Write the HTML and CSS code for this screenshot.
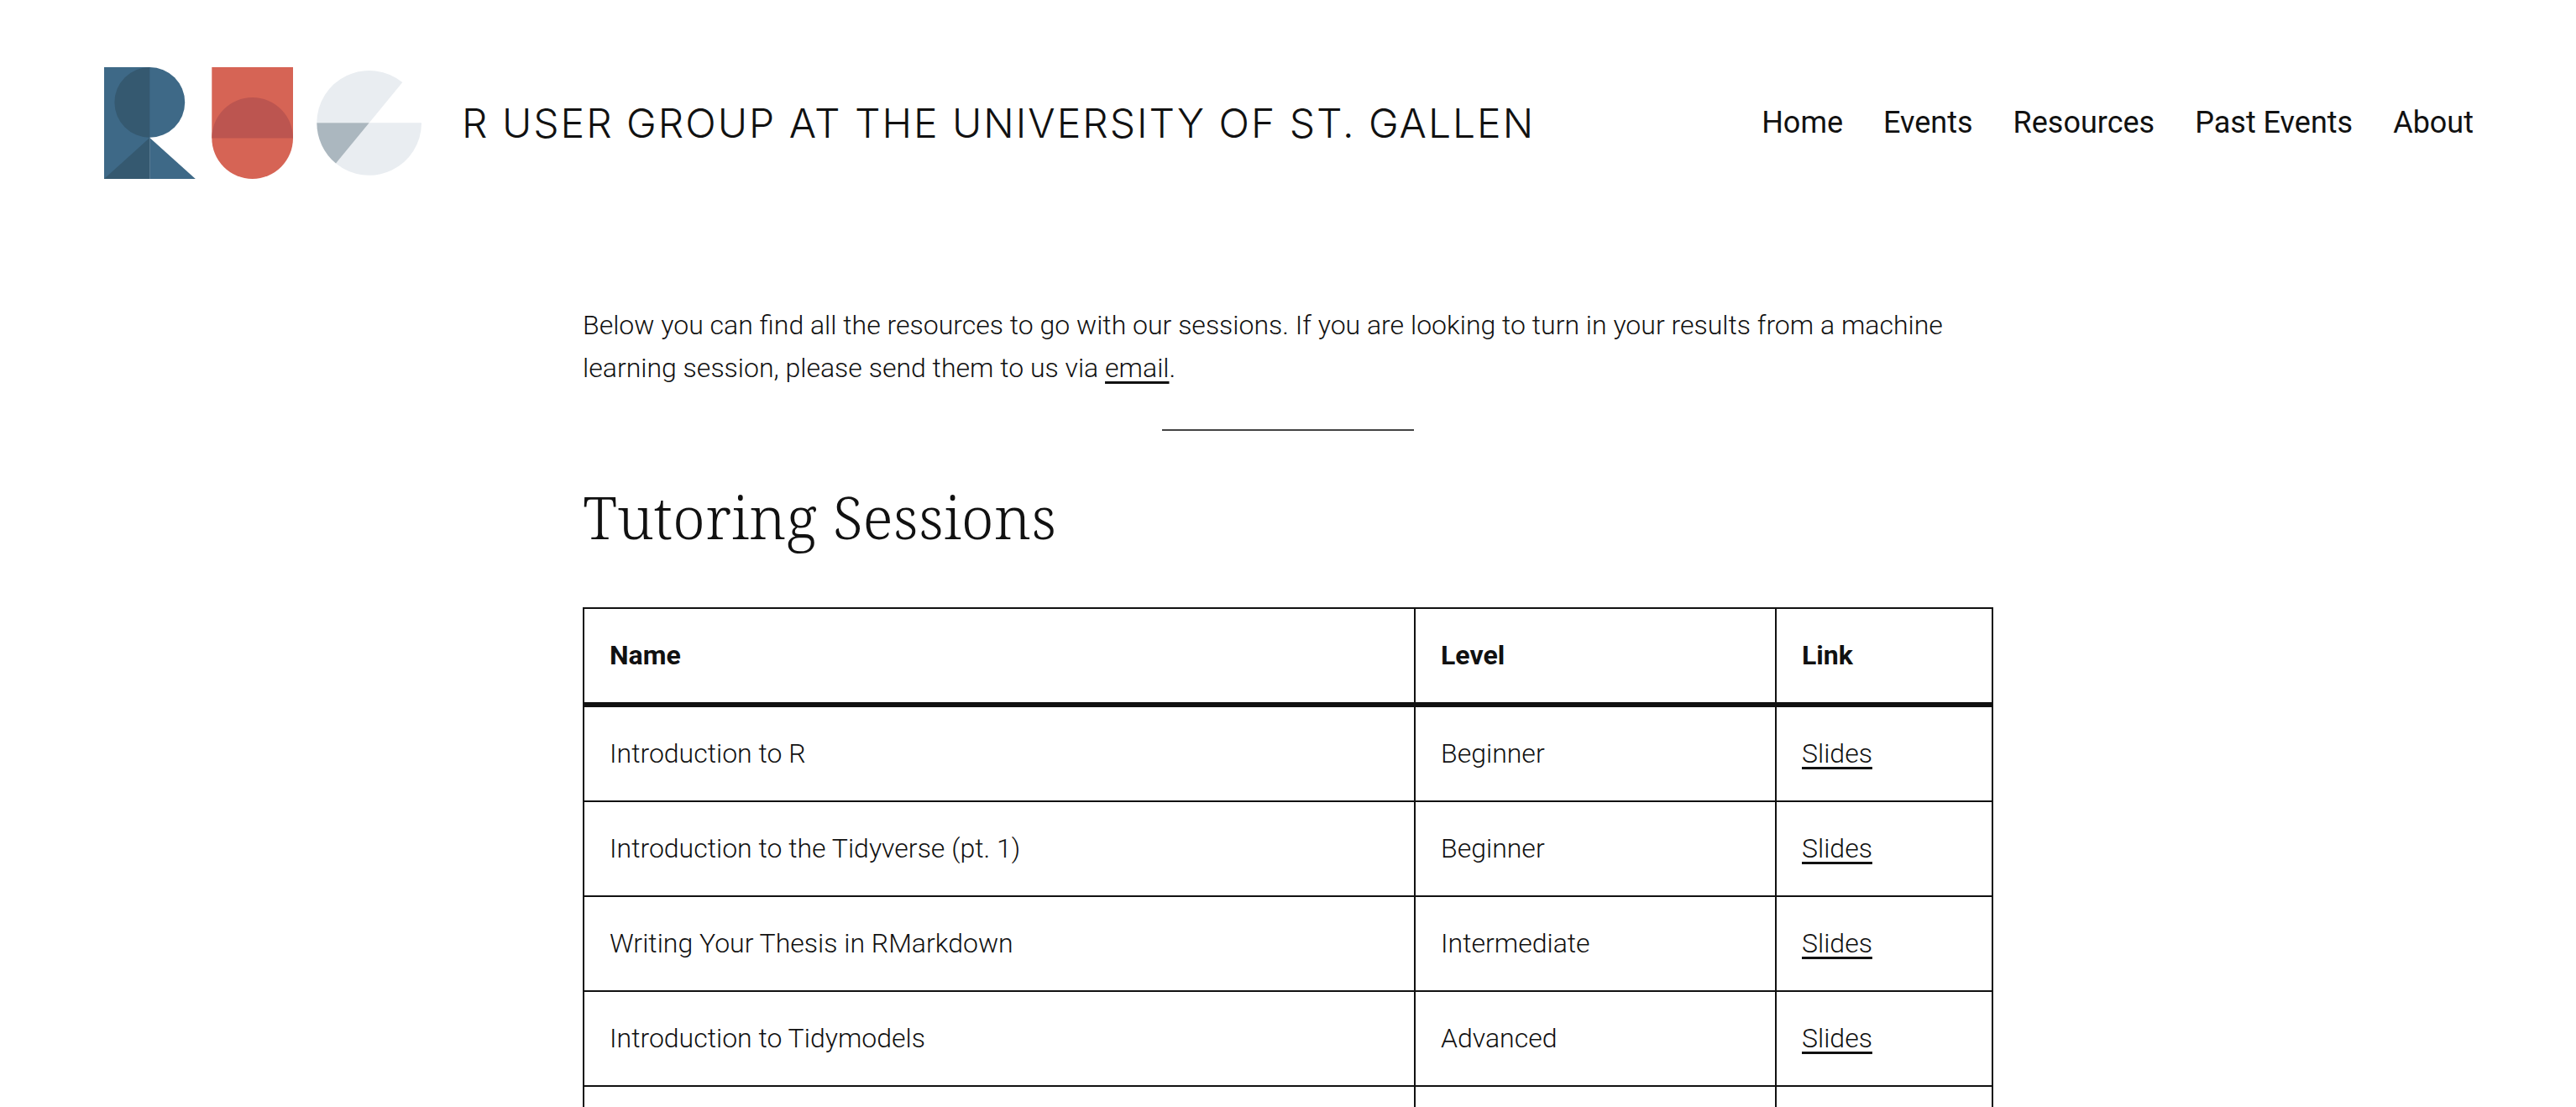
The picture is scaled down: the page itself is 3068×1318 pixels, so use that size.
FILE: index.html
```html
<!DOCTYPE html>
<html lang="en">
<head>
<meta charset="utf-8">
<title>Resources – R User Group at the University of St. Gallen</title>
<link rel="stylesheet" href="styles.css">
</head>
<body>
<header class="site-header">
  <div class="branding">
    <a class="logo" href="#" aria-label="Home page">
      <svg width="378" height="133" viewBox="0 0 378 133" aria-hidden="true">
        <g fill="#3e6987">
          <path d="M0 0H54.3V133H0z"/>
          <circle cx="54.3" cy="41.9" r="41.9"/>
          <path d="M54.3 84L108.8 133H54.3z"/>
        </g>
        <path fill="#355970" d="M54.3 0A41.9 41.9 0 0 0 54.3 83.8zM54.3 84V133H0z"/>
        <path fill="#d66455" d="M128.3 0H225V84.6A48.35 48.35 0 0 1 128.3 84.6z"/>
        <path fill="#bc5550" d="M128.3 84.4A48.35 48.35 0 0 1 225 84.4z"/>
        <path fill="#e9edf1" d="M315.7 66.3H253.3A62.4 62.4 0 0 1 355.3 18.1zM315.7 66.3H378A62.4 62.4 0 0 1 276 114.5z"/>
        <path fill="#abb7bf" d="M315.7 66.3H253.3A62.4 62.4 0 0 0 276 114.5z"/>
      </svg>
    </a>
    <a class="site-title" href="#">R USER GROUP AT THE UNIVERSITY OF ST. GALLEN</a>
  </div>
  <nav class="site-nav" aria-label="Main">
    <a href="#">Home</a>
    <a href="#">Events</a>
    <a href="#">Resources</a>
    <a href="#">Past Events</a>
    <a href="#">About</a>
  </nav>
</header>
<main class="content">
  <p class="intro">Below you can find all the resources to go with our sessions. If you are looking to turn in your results from a machine learning session, please send them to us via <a href="#">email</a>.</p>
  <hr class="divider">
  <h2 class="section-title">Tutoring Sessions</h2>
  <table class="sessions">
    <colgroup><col class="col-name"><col class="col-level"><col class="col-link"></colgroup>
    <thead>
      <tr><th scope="col">Name</th><th scope="col">Level</th><th scope="col">Link</th></tr>
    </thead>
    <tbody>
      <tr><td>Introduction to R</td><td>Beginner</td><td><a href="#">Slides</a></td></tr>
      <tr><td>Introduction to the Tidyverse (pt. 1)</td><td>Beginner</td><td><a href="#">Slides</a></td></tr>
      <tr><td>Writing Your Thesis in RMarkdown</td><td>Intermediate</td><td><a href="#">Slides</a></td></tr>
      <tr><td>Introduction to Tidymodels</td><td>Advanced</td><td><a href="#">Slides</a></td></tr>
      <tr><td></td><td></td><td></td></tr>
    </tbody>
  </table>
</main>
</body>
</html>
```
FILE: styles.css
```css
* {
  box-sizing: border-box;
}

body {
  margin: 0;
  background: #fff;
  color: #111;
  font-family: Roboto, "Liberation Sans", sans-serif;
  font-size: 32px;
  font-weight: 300;
  line-height: 51px;
}

a {
  color: inherit;
}

.site-header {
  display: flex;
  align-items: center;
  justify-content: space-between;
  gap: 48px;
  padding: 80px 122px 80px 124px;
}

.branding {
  display: flex;
  align-items: center;
  gap: 48px;
}

.logo svg {
  display: block;
}

.site-title {
  font-family: Inter, "Liberation Sans", sans-serif;
  font-size: 48px;
  letter-spacing: 2px;
  line-height: 60px;
  text-decoration: none;
}

.site-nav {
  display: flex;
  gap: 48px;
  font-size: 36px;
  font-weight: 400;
  white-space: nowrap;
}

.site-nav a {
  text-decoration: none;
}

.content {
  max-width: 1680px;
  margin: 0 auto;
  padding-top: 69px;
}

.intro {
  margin: 0;
}

.intro a,
.sessions a {
  text-decoration-thickness: 3px;
  text-underline-offset: 5px;
  text-decoration-skip-ink: none;
}

.divider {
  width: 300px;
  height: 2px;
  margin: 47px auto 57px;
  border: 0;
  background: #444;
}

.section-title {
  margin: 0 0 63px;
  font-family: "Noto Serif", "DejaVu Serif", serif;
  font-size: 70px;
  font-weight: 350;
  line-height: 90px;
}

.sessions {
  width: 100%;
  border-collapse: collapse;
  table-layout: fixed;
}

.col-name {
  width: 59%;
}

.col-link {
  width: 258px;
}

.sessions th,
.sessions td {
  height: 113px;
  padding: 30px;
  border: 2px solid #111;
  text-align: left;
}

.sessions thead th {
  border-bottom-width: 6px;
  font-weight: 700;
}
```
